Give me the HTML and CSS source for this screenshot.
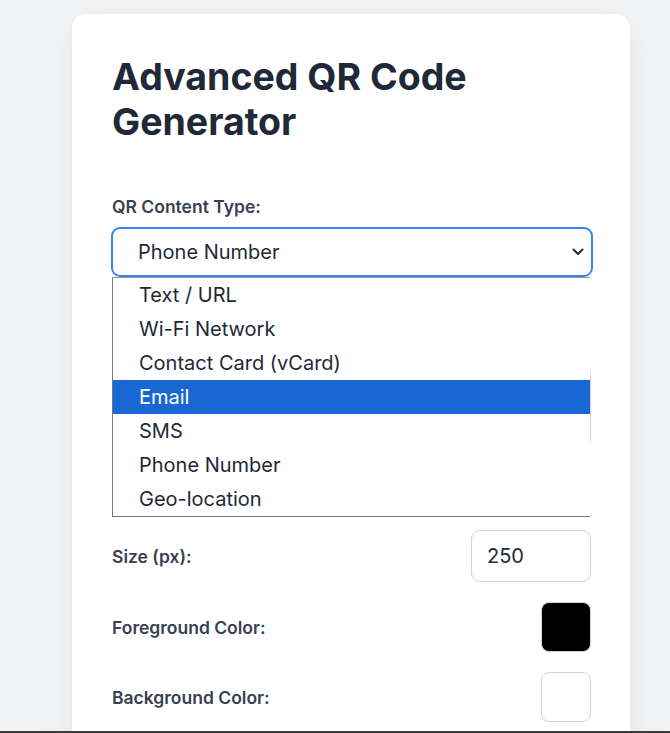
FILE: index.html
```html
<!DOCTYPE html>
<html lang="en">
<head>
<meta charset="utf-8">
<title>Advanced QR Code Generator</title>
<link rel="stylesheet" href="styles.css">
</head>
<body>
<div class="page">
  <main class="card">
    <h1 class="title">Advanced QR Code Generator</h1>

    <div class="group">
      <label class="label" for="type">QR Content Type:</label>
      <div class="select-wrap">
        <div class="select" id="type">Phone Number</div>
        <svg class="chevron" width="12" height="8" viewBox="0 0 12 8"><path d="M1.5 1.5 L6 6 L10.5 1.5" fill="none" stroke="#1f2937" stroke-width="2" stroke-linecap="round" stroke-linejoin="round"/></svg>
        <ul class="menu">
          <li class="option">Text / URL</li>
          <li class="option">Wi-Fi Network</li>
          <li class="option">Contact Card (vCard)</li>
          <li class="option option-active">Email</li>
          <li class="option">SMS</li>
          <li class="option">Phone Number</li>
          <li class="option">Geo-location</li>
        </ul>
      </div>
    </div>

    <div class="field-area">
      <div class="input-wide"></div>
    </div>

    <div class="row">
      <span class="row-label">Size (px):</span>
      <div class="num-input">250</div>
    </div>
    <div class="row">
      <span class="row-label">Foreground Color:</span>
      <div class="swatch swatch-black"></div>
    </div>
    <div class="row">
      <span class="row-label">Background Color:</span>
      <div class="swatch swatch-white"></div>
    </div>
  </main>
</div>
<div class="bottom-edge"></div>
</body>
</html>
```

FILE: styles.css
```css
* { box-sizing: border-box; }
html, body {
  margin: 0;
  padding: 0;
  height: 100%;
  overflow: hidden;
}
body {
  background: #f3f4f6;
  font-family: Inter, "Noto Sans", sans-serif;
  color: #1f2937;
}
.page {
  padding: 14px 40px 0 72px;
}
.card {
  background: #ffffff;
  border-radius: 14px;
  box-shadow: 0 10px 40px rgba(0, 0, 0, 0.07), 0 1px 3px rgba(0,0,0,0.04);
  padding: 40px 39px 40px 40px;
  min-height: 760px;
}
.title {
  margin: 0 0 51px 0;
  font-size: 37.5px;
  line-height: 45px;
  font-weight: 700;
  color: #1f2937;
}
.group {
  margin-bottom: 20px;
}
.label {
  display: block;
  font-size: 17.5px;
  line-height: 24px;
  font-weight: 600;
  color: #374151;
  margin-bottom: 8px;
}
.select-wrap {
  position: relative;
}
.select {
  height: 50px;
  border: 2px solid #3b82f6;
  border-radius: 9px;
  padding: 0 0 0 25px;
  font-size: 20px;
  line-height: 46px;
  color: #1f2937;
  margin: 0 -2px 0 -1px;
}
.chevron {
  position: absolute;
  right: 7px;
  top: 21px;
}
.menu {
  position: absolute;
  top: 50px;
  left: 0;
  right: 1px;
  margin: 0;
  padding: 0;
  list-style: none;
  background: #ffffff;
  border-left: 1px solid #767676;
  border-bottom: 1px solid #767676;
  border-top: 1px solid #9a9a9a;
  z-index: 5;
}
.option {
  height: 34px;
  line-height: 34px;
  padding-left: 26px;
  font-size: 20px;
  color: #1f2937;
}
.option-active {
  background: #1967d2;
  color: #ffffff;
}
.field-area {
  height: 213px;
  padding-top: 70px;
  margin-bottom: 20px;
}
.input-wide {
  height: 80px;
  border: 1px solid #d1d5db;
  border-radius: 8px;
}
.row {
  display: flex;
  align-items: center;
  justify-content: space-between;
  margin-bottom: 20px;
}
.row-label {
  font-size: 17.5px;
  font-weight: 600;
  color: #374151;
}
.num-input {
  width: 120px;
  height: 52px;
  border: 1px solid #d1d5db;
  border-radius: 9px;
  padding-left: 15px;
  font-size: 20px;
  line-height: 50px;
  color: #1f2937;
}
.swatch {
  width: 50px;
  height: 50px;
  border-radius: 8px;
}
.swatch-black {
  background: #000000;
  border: 1px solid #d1d5db;
}
.swatch-white {
  background: #ffffff;
  border: 1px solid #d1d5db;
}
.bottom-edge {
  position: fixed;
  left: 0;
  right: 0;
  bottom: 0;
  height: 2px;
  background: #3c3c3c;
}
```
